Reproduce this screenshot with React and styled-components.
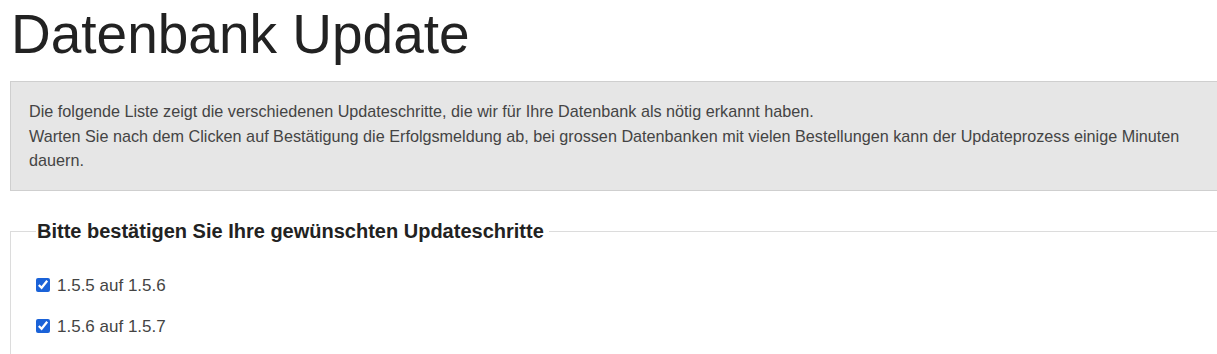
import React, { useState } from "react";
import styled, { createGlobalStyle } from "styled-components";

const GlobalStyle = createGlobalStyle`
  html, body {
    margin: 0;
    padding: 0;
    background: #fff;
    overflow-x: hidden;
  }
  body {
    font-family: "Liberation Sans", Arial, sans-serif;
    color: #333;
  }
`;

const Page = styled.div`
  padding: 0 0 0 10px;
`;

const Title = styled.h1`
  margin: 0;
  padding: 2px 0 0 1px;
  font-size: 55px;
  font-weight: 400;
  line-height: 64px;
  color: #222;
`;

const InfoBox = styled.div`
  margin: 15px -10px 0 0;
  padding: 17px 18px 17px;
  background-color: #e6e6e6;
  border: 1px solid #cfcfcf;
  font-size: 16.2px;
  line-height: 24.5px;
  color: #444;
`;

const Fieldset = styled.fieldset`
  margin: 29px -30px 0 0;
  padding: 10px 26px 20px;
  border: 1px solid #dcdcdc;
  border-right: none;
  border-bottom: none;
`;

const Legend = styled.legend`
  padding: 0 5px 0 1px;
  margin-left: -1px;
  font-size: 20px;
  font-weight: 700;
  color: #222;
`;

const StepList = styled.div`
  display: flex;
  flex-direction: column;
  gap: 20px;
  padding-top: 22px;
`;

const StepLabel = styled.label`
  display: flex;
  align-items: center;
  gap: 7px;
  font-size: 17px;
  line-height: 21px;
  color: #444;
`;

const Checkbox = styled.input`
  width: 14px;
  height: 14px;
  margin: 0 0 0 -1px;
  accent-color: #1a62d8;
`;

const initialSteps = [
  { id: "155", label: "1.5.5 auf 1.5.6", checked: true },
  { id: "156", label: "1.5.6 auf 1.5.7", checked: true },
];

const App = () => {
  const [steps, setSteps] = useState(initialSteps);

  const toggleStep = (id) => {
    setSteps((prev) =>
      prev.map((step) =>
        step.id === id ? { ...step, checked: !step.checked } : step
      )
    );
  };

  return (
    <>
      <GlobalStyle />
      <Page>
        <Title>Datenbank Update</Title>
        <InfoBox>
          Die folgende Liste zeigt die verschiedenen Updateschritte, die wir
          für Ihre Datenbank als nötig erkannt haben.
          <br />
          Warten Sie nach dem Clicken auf Bestätigung die Erfolgsmeldung ab,
          bei grossen Datenbanken mit vielen Bestellungen kann der
          Updateprozess einige Minuten dauern.
        </InfoBox>
        <Fieldset>
          <Legend>Bitte bestätigen Sie Ihre gewünschten Updateschritte</Legend>
          <StepList>
            {steps.map((step) => (
              <StepLabel key={step.id}>
                <Checkbox
                  type="checkbox"
                  checked={step.checked}
                  onChange={() => toggleStep(step.id)}
                />
                {step.label}
              </StepLabel>
            ))}
          </StepList>
        </Fieldset>
      </Page>
    </>
  );
};

export default App;
